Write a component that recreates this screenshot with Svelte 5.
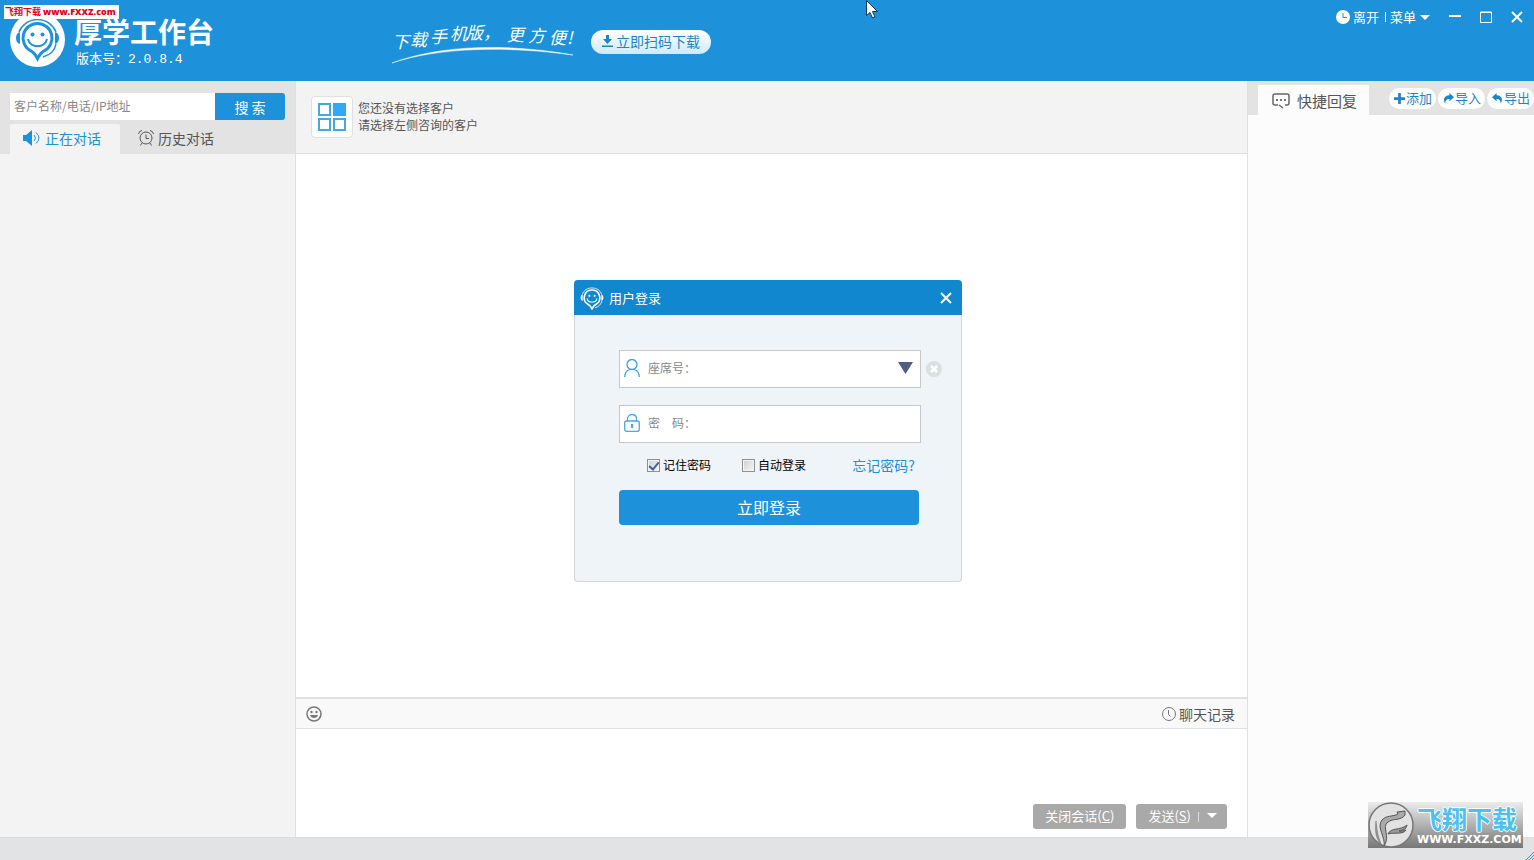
<script>
  let keyword = $state("");
  let account = $state("");
  let password = $state("");
  let message = $state("");
  let remember = $state(true);
  let autoLogin = $state(false);
  let activeTab = $state("current");
  let loginOpen = $state(true);

  const replyActions = [
    { label: "添加", icon: "M4.500 0h3v4.500H12v3H7.500V12h-3V7.500H0v-3h4.500z" },
    { label: "导入", icon: "M7 0l5 4.500L7 9V6.500C4 6.500 2.500 8 2.500 11.500 0 8 .5 3 7 2.500z" },
    { label: "导出", icon: "M5 0L0 4.500 5 9V6.500c3 0 4.500 1.500 4.500 5C12 8 11.500 3 5 2.500z" },
  ];
</script>

{#snippet face()}
  <path d="M27.500 11.500a14.500 14.500 0 0 1 7 27.200c-3 1.500-5 4-7 8-2-4-4-6.500-7-8a14.500 14.500 0 0 1 7-27.200z" fill="none" stroke="currentColor" stroke-width="3" />
  <path d="M9 20a20 20 0 0 1 37 0M46 32c-1 6-6 11-13 13" fill="none" stroke="currentColor" stroke-width="1.500" />
  <path d="M10 20v12q-4-1-4-6t4-6zM45 20v12q4-1 4-6t-4-6z" fill="currentColor" />
  <circle cx="22.500" cy="22.500" r="2" fill="currentColor" />
  <circle cx="32.500" cy="22.500" r="2" fill="currentColor" />
  <path d="M18 27c2 9.500 17 9.500 19 0" fill="none" stroke="currentColor" stroke-width="2" />
{/snippet}

<div class="app">
  <header class="topbar">
    <div class="brand">
      <span class="logo">
        <svg width="55" height="55" viewBox="0 0 55 55">{@render face()}</svg>
      </span>
      <div class="brand-text">
        <h1>厚学工作台</h1>
        <p>版本号：2.0.8.4</p>
      </div>
    </div>
    <div class="promo">
      <svg class="slogan" width="184" height="48" viewBox="0 0 184 48">
        <text x="2 20 40 60 76 93 117 138 159 177" y="32 30 27 24 23 23 25 26 28 28">下载手机版，更方便!</text>
        <path d="M2 47C50 29 116 27 183 39C117 30 50 31 2 47z" fill="#fff" stroke="#fff" stroke-width="0.500" />
      </svg>
      <button class="download">
        <svg width="11" height="12" viewBox="0 0 11 12">
          <path d="M4 0h3v4h3L5.500 9 1 4h3zM0 10.500h11V12H0z" fill="currentColor" />
        </svg>
        立即扫码下载
      </button>
    </div>
    <nav class="window-bar">
      <button class="status">
        <svg width="14" height="14" viewBox="0 0 14 14">
          <circle cx="7" cy="7" r="7" fill="#fff" />
          <path d="M7 3v4.500h4" fill="none" stroke="#1d91d9" />
        </svg>
        离开
      </button>
      <span class="bar"></span>
      <button class="menu">
        菜单
        <svg width="10" height="5" viewBox="0 0 10 5"><path d="M0 0h10L5 5z" fill="#fff" /></svg>
      </button>
      <button class="win" aria-label="最小化">
        <svg width="12" height="12" viewBox="0 0 12 12"><path d="M0 5h12" stroke="#fff" stroke-width="2" /></svg>
      </button>
      <button class="win" aria-label="最大化">
        <svg width="12" height="12" viewBox="0 0 12 12"><path d="M.5 1h11v10.500H.5zM0 1.500h12" fill="none" stroke="#fff" /></svg>
      </button>
      <button class="win" aria-label="关闭">
        <svg width="12" height="12" viewBox="0 0 12 12"><path d="M1 1l10 10M11 1L1 11" stroke="#fff" stroke-width="2" /></svg>
      </button>
    </nav>
  </header>

  <main>
    <aside class="sidebar">
      <div class="side-head">
        <form class="search" onsubmit={(e) => e.preventDefault()}>
          <input aria-label="搜索客户" placeholder="客户名称/电话/IP地址" bind:value={keyword} />
          <button>搜 索</button>
        </form>
        <div class="tabs">
          <button class="tab" class:active={activeTab === "current"} onclick={() => (activeTab = "current")}>
            <svg width="18" height="16" viewBox="0 0 18 16">
              <path d="M0 5h3l6-5v16l-6-5H0z" fill="currentColor" />
              <path d="M11 5q3 3 0 6M13 2.500q6 5.500 0 11" fill="none" stroke="currentColor" />
            </svg>
            正在对话
          </button>
          <button class="tab" class:active={activeTab === "history"} onclick={() => (activeTab = "history")}>
            <svg width="16" height="16" viewBox="0 0 16 16" fill="none" stroke="currentColor">
              <circle cx="8" cy="8" r="6" />
              <path d="M8 4.500V8.500h3M.5 4Q1 1 4 .5M12 .5q3 .5 3.500 3.500M4 13l-1.500 2.500M12 13l1.500 2.500" />
            </svg>
            历史对话
          </button>
        </div>
      </div>
    </aside>

    <section class="chat">
      <div class="chat-head">
        <span class="avatar">
          <svg width="28" height="28" viewBox="0 0 28 28">
            <path d="M1 1h11v11H1zM1 16h11v11H1zM16 16h11v11H16z" fill="#fff" stroke="#45a8e6" stroke-width="2" />
            <path d="M15 0h13v13H15z" fill="#31a9f5" />
          </svg>
        </span>
        <p>您还没有选择客户<br />请选择左侧咨询的客户</p>
      </div>
      <div class="messages"></div>
      <div class="toolbar">
        <button aria-label="表情">
          <svg width="16" height="16" viewBox="0 0 16 16">
            <circle cx="8" cy="8" r="7" fill="none" stroke="#777" stroke-width="1.500" />
            <circle cx="5.500" cy="6" r="1.200" fill="#777" />
            <circle cx="10.500" cy="6" r="1.200" fill="#777" />
            <path d="M4 9h8c-1 4-7 4-8 0z" fill="#777" />
          </svg>
        </button>
        <button class="log">
          <svg width="14" height="14" viewBox="0 0 14 14" fill="none" stroke="#777">
            <circle cx="7" cy="7" r="6.500" /><path d="M6.500 3v4.500l2 2" />
          </svg>
          聊天记录
        </button>
      </div>
      <div class="composer">
        <textarea aria-label="输入消息" bind:value={message}></textarea>
        <div class="composer-actions">
          <button class="gray">关闭会话(<u>C</u>)</button>
          <button class="gray send">
            发送(<u>S</u>) <span class="bar"></span>
            <svg width="10" height="5" viewBox="0 0 10 5"><path d="M0 0h10L5 5z" fill="#fff" /></svg>
          </button>
        </div>
      </div>
    </section>

    <aside class="replies">
      <div class="reply-head">
        <button class="reply-tab">
          <svg width="18" height="16" viewBox="0 0 18 16">
            <path d="M6 12H3q-2 0-2-2V3q0-2 2-2h12q2 0 2 2v7q0 2-2 2h-2M7 12l4 3" fill="none" stroke="#666" stroke-width="1.500" />
            <path d="M4 6h2v2H4zM8 6h2v2H8zM12 6h2v2h-2z" fill="#777" />
          </svg>
          快捷回复
        </button>
        <div class="reply-actions">
          {#each replyActions as action}
            <button>
              <svg width="11" height="11" viewBox="0 0 12 12"><path d={action.icon} fill="currentColor" /></svg>
              {action.label}
            </button>
          {/each}
        </div>
      </div>
    </aside>
  </main>

  <footer>
    <svg width="8" height="8" viewBox="0 0 8 8"><path d="M0 8L8 0M3 8l5-5M6 8l2-2" stroke="#3f94c4" /></svg>
  </footer>

  {#if loginOpen}
    <div class="login" role="dialog" aria-label="用户登录">
      <div class="login-head">
        <svg width="26" height="24" viewBox="4 4 47 45">{@render face()}</svg>
        <h2>用户登录</h2>
        <button aria-label="关闭" onclick={() => (loginOpen = false)}>
          <svg width="12" height="12" viewBox="0 0 12 12"><path d="M1 1l10 10M11 1L1 11" stroke="#fff" stroke-width="2" /></svg>
        </button>
      </div>
      <form class="login-form" onsubmit={(e) => e.preventDefault()}>
        <div class="field-row">
          <div class="field">
            <svg width="16" height="18" viewBox="0 0 16 18" fill="none" stroke="#3a9fdc" stroke-width="1.300">
              <circle cx="8" cy="5.500" r="5" /><path d="M.7 18c0-4 2-6.500 5-7.500M15.300 18c0-4-2-6.500-5-7.500" />
            </svg>
            <label for="account">座席号：</label>
            <input id="account" bind:value={account} />
            <button type="button" aria-label="选择座席号">
              <svg width="15" height="12" viewBox="0 0 15 12"><path d="M0 0h15L7.500 12z" fill="#4f5f7f" /></svg>
            </button>
          </div>
          <button type="button" class="clear" aria-label="清除" onclick={() => (account = "")}>
            <svg width="16" height="16" viewBox="0 0 16 16">
              <circle cx="8" cy="8" r="8" fill="#dcdfe1" />
              <path d="M5 5l6 6M11 5l-6 6" stroke="#fff" stroke-width="2.500" />
            </svg>
          </button>
        </div>
        <div class="field">
          <svg width="16" height="18" viewBox="0 0 16 18" fill="none" stroke="#4aa9df" stroke-width="1.300">
            <rect x=".7" y="7" width="14.600" height="10.300" rx="2" />
            <path d="M3.500 7V5c0-6 9-6 9 0v2" /><path d="M8 10v4M7 11h2" stroke-width="2" />
          </svg>
          <label for="password">密　码：</label>
          <input id="password" type="password" bind:value={password} />
        </div>
        <div class="options">
          <label><input type="checkbox" bind:checked={remember} />记住密码</label>
          <label><input type="checkbox" bind:checked={autoLogin} />自动登录</label>
          <a href="#forgot">忘记密码?</a>
        </div>
        <button class="submit">立即登录</button>
      </form>
    </div>
  {/if}

  <div class="site-tag">飞翔下载 <b>www.FXXZ.com</b></div>

  <div class="site-mark">
    <svg width="46" height="46" viewBox="0 0 46 46">
      <circle cx="23" cy="23" r="22" fill="#e2e2e2" stroke="#777" stroke-width="1.500" />
      <path d="M14 44C7 36 7 28 8 19C9 30 11 38 14 44z" fill="#999" stroke="#666" stroke-width="0.500" />
      <path d="M16 44C18 36 8 25 14 18c4-5 11-3 16-6l-1-2 8-1v4c-4 6-12 3-17 7-7 5 3 14-4 24z" fill="#aaa" stroke="#555" />
      <path d="M20 32c3-7 12-3 19-9-1 5-4 5-8 6 3 0 5 0 7-1-3 5-11 2-18 4z" fill="#999" stroke="#555" />
    </svg>
    <div>
      <strong>飞翔下载</strong>
      <span>WWW.FXXZ.COM</span>
    </div>
  </div>

  <svg class="pointer" width="12" height="19" viewBox="0 0 12 19">
    <path d="M.5 .5v15l3.500-3 2.500 5.500 2.500-1-2.500-5.500h5z" fill="#fff" stroke="#123a5c" />
  </svg>
</div>

<style>
  :global(body) {
    margin: 0;
  }

  .app {
    position: relative;
    display: flex;
    flex-direction: column;
    min-height: 100vh;
    overflow: hidden;
    font-family: "Noto Sans CJK SC", sans-serif;
    font-size: 12px;
    line-height: 18px;
    color: #555;
    background: #fff;
  }

  .app * {
    box-sizing: border-box;
  }

  h1,
  h2,
  p {
    margin: 0;
  }

  svg {
    flex: none;
    display: block;
  }

  button {
    display: flex;
    align-items: center;
    padding: 0;
    border: 0;
    background: none;
    color: inherit;
    font: inherit;
    white-space: nowrap;
    cursor: pointer;
  }

  input,
  textarea {
    min-width: 0;
    padding: 0;
    border: 0;
    outline: none;
    background: transparent;
    font: inherit;
  }

  /* top bar */
  .topbar {
    display: flex;
    height: 81px;
    background: #1d91d9;
    color: #fff;
  }

  .brand {
    display: flex;
    width: 390px;
    padding: 12px 0 0 10px;
    gap: 9px;
  }

  .logo {
    width: 55px;
    height: 55px;
    border-radius: 50%;
    background: #fff;
    color: #1d91d9;
  }

  h1 {
    font-size: 28px;
    line-height: 38px;
    font-weight: 700;
  }

  .brand-text p {
    padding-left: 2px;
    font-family: "Liberation Mono", "Noto Sans CJK SC", monospace;
    font-size: 13px;
    line-height: 20px;
  }

  .promo {
    display: flex;
    align-items: flex-start;
    gap: 17px;
    padding-top: 16px;
  }

  .slogan {
    overflow: visible;
  }

  .slogan text {
    fill: #fff;
    font-size: 17px;
    font-style: italic;
  }

  .download {
    height: 24px;
    margin-top: 14px;
    padding: 0 11px 2px;
    gap: 3px;
    border-radius: 12px;
    background: linear-gradient(#fff, #cfeafa);
    color: #1d86c8;
    font-size: 14px;
  }

  .window-bar {
    display: flex;
    align-items: flex-start;
    margin-left: auto;
    padding: 8px 11px 0 0;
  }

  .window-bar button {
    height: 18px;
    font-size: 13px;
  }

  .status {
    gap: 3px;
  }

  .menu {
    gap: 4px;
  }

  .window-bar .win {
    margin-left: 19px;
  }

  .bar {
    width: 1px;
    height: 10px;
    margin: 4px 4px 0 6px;
    background: #fff;
  }

  main {
    display: flex;
    flex: 1;
  }

  /* left column */
  .sidebar {
    width: 296px;
    border-right: 1px solid #e0e0e0;
    background: #f3f3f3;
  }

  .side-head {
    padding: 12px 10px 0;
    background: #e3e3e3;
  }

  .search {
    display: flex;
    height: 27px;
  }

  .search input {
    flex: 1;
    padding: 0 4px 2px;
    background: #fff;
    color: #555;
  }

  .search input::placeholder {
    color: #888;
    opacity: 1;
  }

  .search button {
    justify-content: center;
    width: 70px;
    border-radius: 0 3px 3px 0;
    background: #1d91d9;
    color: #fff;
    font-size: 14px;
  }

  .tabs {
    display: flex;
    gap: 5px;
    padding-top: 4px;
  }

  .tab {
    height: 30px;
    padding: 0 19px 2px 13px;
    gap: 4px;
    font-size: 14px;
  }

  .tab.active {
    border-radius: 2px 2px 0 0;
    background: #f3f3f3;
    color: #1d91d9;
  }

  /* conversation */
  .chat {
    display: flex;
    flex: 1;
    flex-direction: column;
  }

  .chat-head {
    display: flex;
    gap: 5px;
    height: 73px;
    padding: 15px 15px 0;
    border-bottom: 1px solid #e0e0e0;
    background: #f3f3f3;
    line-height: 17px;
  }

  .chat-head p {
    padding-top: 3px;
  }

  .avatar {
    display: grid;
    place-items: center;
    width: 42px;
    height: 42px;
    border: 1px solid #e0e0e0;
    border-radius: 4px;
    background: #fff;
  }

  .messages {
    flex: 1;
  }

  .toolbar {
    display: flex;
    align-items: center;
    justify-content: space-between;
    height: 32px;
    padding: 0 12px 0 10px;
    border-top: 2px solid #dde1e1;
    border-bottom: 1px solid #dde1e1;
    background: #f9f9f9;
  }

  .log {
    gap: 3px;
    font-size: 14px;
  }

  .composer {
    display: flex;
    flex-direction: column;
    height: 108px;
    padding: 4px 20px 8px 10px;
  }

  .composer textarea {
    flex: 1;
    resize: none;
  }

  .composer-actions {
    display: flex;
    justify-content: flex-end;
    gap: 10px;
  }

  .gray {
    height: 25px;
    padding: 0 12px 2px;
    border-radius: 3px;
    background: #a9a9a9;
    color: #fff;
    font-size: 13px;
  }

  .gray.send {
    padding-right: 10px;
  }

  .gray .bar {
    margin: 2px 8px 0 7px;
    background: #ddd;
  }

  /* quick replies */
  .replies {
    width: 287px;
    border-left: 1px solid #dde1e1;
    background: #fcfcfc;
  }

  .reply-head {
    display: flex;
    height: 34px;
    padding: 4px 0 0 10px;
    background: #e3e3e3;
  }

  .reply-tab {
    height: 30px;
    padding: 2px 12px 0 14px;
    gap: 7px;
    background: #fcfcfc;
    font-size: 15px;
  }

  .reply-actions {
    display: flex;
    gap: 2px;
    margin-left: auto;
    padding-top: 3px;
  }

  .reply-actions button {
    height: 21px;
    padding: 0 4px 1px 5px;
    gap: 1px;
    border-radius: 11px;
    background: #fff;
    color: #1d86c8;
    font-size: 13px;
  }

  footer {
    display: flex;
    align-items: flex-end;
    justify-content: flex-end;
    height: 23px;
    border-top: 1px solid #dcdcdc;
    background: #e2e3e4;
  }

  /* login window */
  .login {
    position: absolute;
    inset: 2px 0 0 2px;
    width: 388px;
    height: fit-content;
    margin: auto;
    border-radius: 4px;
    overflow: hidden;
    background: #eff4f8;
    box-shadow: inset 0 0 0 1px #d3d6d8;
  }

  .login-head {
    display: flex;
    align-items: center;
    height: 35px;
    padding: 0 10px 0 5px;
    gap: 4px;
    background: #1187cf;
    color: #fff;
  }

  h2 {
    flex: 1;
    font-size: 13px;
    font-weight: 400;
  }

  .login-form {
    padding: 35px 20px 57px 45px;
  }

  .field-row {
    display: flex;
    align-items: center;
    gap: 5px;
    margin-bottom: 17px;
  }

  .field {
    display: flex;
    align-items: center;
    width: 302px;
    height: 38px;
    padding: 0 7px 2px 4px;
    border: 1px solid #c8c8c8;
    background: #fff;
  }

  .field label {
    padding-left: 8px;
    color: #888;
  }

  .field input {
    flex: 1;
  }

  .options {
    display: flex;
    align-items: center;
    height: 47px;
    padding: 0 27px 3px 28px;
    color: #000;
  }

  .options label {
    display: flex;
    align-items: center;
    gap: 3px;
    margin-right: 31px;
  }

  .options input {
    display: grid;
    place-items: center;
    width: 13px;
    height: 13px;
    margin: 0;
    appearance: none;
    border: 1px solid #8e8f8f;
    background: linear-gradient(135deg, #cdd0d4, #f6f6f6);
    box-shadow: inset 0 0 0 1px #f4f4f4;
  }

  .options input:checked::before {
    content: "";
    width: 4px;
    height: 8px;
    border: solid #4b5f9c;
    border-width: 0 2px 2px 0;
    transform: rotate(40deg);
  }

  .options a {
    margin-left: auto;
    color: #1d91d9;
    font-size: 14px;
    text-decoration: none;
  }

  .submit {
    justify-content: center;
    width: 300px;
    height: 35px;
    padding-bottom: 2px;
    border-radius: 4px;
    background: #1d91d9;
    color: #fff;
    font-size: 16px;
  }

  /* site marks laid over the window */
  .site-tag {
    position: absolute;
    top: 5px;
    left: 4px;
    padding: 0 3px 0 1px;
    background: #fff;
    color: #e60012;
    font-size: 9px;
    font-weight: 700;
    line-height: 14px;
    white-space: nowrap;
  }

  .site-tag b {
    font-family: "Open Sans", sans-serif;
    font-size: 9px;
  }

  .site-mark {
    position: absolute;
    right: 11px;
    bottom: 12px;
    display: flex;
    align-items: center;
    width: 155px;
    height: 46px;
    background: linear-gradient(#ececec, #777);
  }

  .site-mark div {
    display: flex;
    flex-direction: column;
    padding-left: 3px;
  }

  .site-mark strong {
    color: #4cc0ee;
    font-size: 25px;
    line-height: 29px;
    text-shadow: 1px 0 #fff, -1px 0 #fff, 0 1px #fff, 0 -1px #fff;
  }

  .site-mark span {
    color: #fff;
    font-family: "DejaVu Sans", sans-serif;
    font-size: 11px;
    font-weight: 700;
    line-height: 14px;
  }

  .pointer {
    position: absolute;
    top: 0;
    left: 866px;
  }
</style>
